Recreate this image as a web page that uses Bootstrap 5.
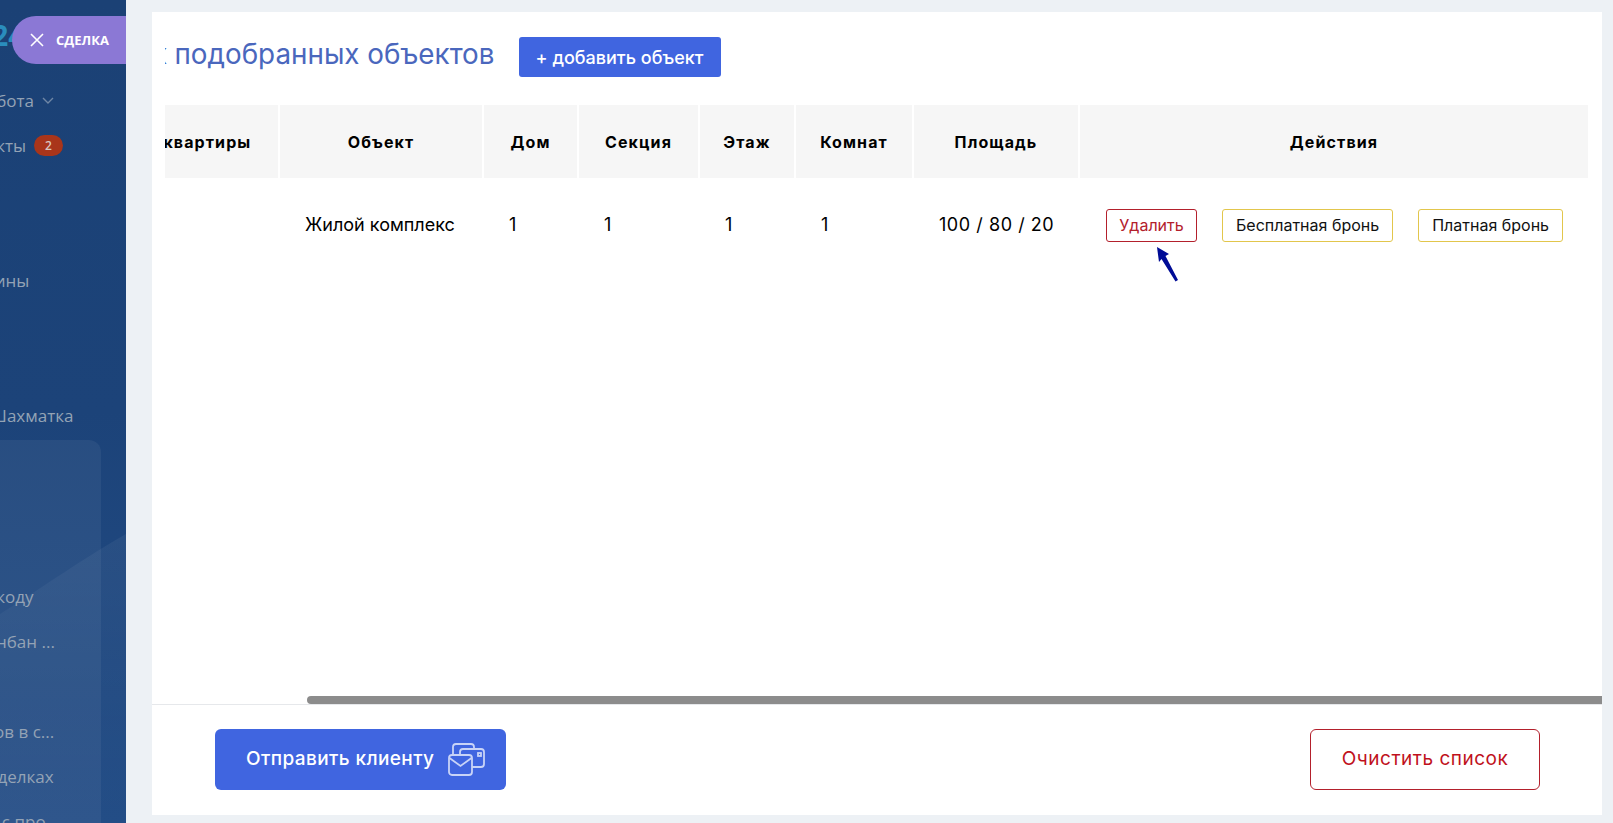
<!DOCTYPE html>
<html lang="ru">
<head>
<meta charset="UTF-8">
<meta name="viewport" content="width=device-width, initial-scale=1">
<title>Список подобранных объектов</title>
<link href="https://cdn.jsdelivr.net/npm/bootstrap@5.3.2/dist/css/bootstrap.min.css" rel="stylesheet">
<style>
    html, body { height: 100%; }
    body { overflow: hidden; background: #edf1f5; font-family: "Inter", "Liberation Sans", sans-serif; }

    /* левое меню */
    .side-panel { width: 126px; height: 823px; overflow: hidden; background: linear-gradient(180deg, #1b4175 0%, #1c4379 50%, #234d86 100%); }
    .side-glass { left: 0; top: 440px; width: 101px; height: 400px; border-radius: 0 12px 0 0; background: rgba(255,255,255,.055); }
    .side-wave { left: 0; top: 534px; width: 126px; height: 289px; }
    .side-logo { left: -44px; top: 13px; font: 700 28px "Open Sans", sans-serif; color: #2a8dbd; line-height: 44px; }
    .deal-pill { left: 12px; top: 16px; width: 114px; height: 48px; border-radius: 24px 0 0 24px; background: #8b78d5; color: #fff; font: 700 13px "Open Sans", sans-serif; }
    .deal-close { margin: 0 11px 0 17px; }
    .side-list { margin: 0; padding: 78px 0 0; list-style: none; }
    .side-row { height: 45px; display: flex; align-items: center; gap: 8px; margin-left: -60px; white-space: nowrap; color: #94a3b5; font: 400 17px "Open Sans", sans-serif; }
    .side-row-shift { margin-left: -55px; }
    .side-row-back { margin-left: -63px; }
    .side-row-far { margin-left: -50px; }
    .side-row-low { margin-top: 1px; }
    .side-count { background: #a9351a; color: #d9c7c0; font-size: 12px; font-weight: 600; border-radius: 11px; padding: 2px 11px; line-height: 17px; }

    /* карточка */
    .page-main { padding: 12px 11px 8px 26px; height: 823px; min-width: 0; }
    .objects-card { background: #fff; height: 803px; }
    .objects-scroll { margin-left: 13px; overflow: hidden; }
    .objects-inner { width: 1609px; padding: 25px 14px 0 0; }
    .title-row { height: 40px; padding-left: 73px; gap: 24px; }
    .objects-title { margin: 0; padding-bottom: 4px; font-size: 27.8px; font-weight: 400; color: #4a67bd; white-space: nowrap; }
    .btn-add { background: #4065e0; color: #fff; border: 0; border-radius: 3px; height: 40px; width: 202px; padding: 0; font-size: 18px; font-weight: 500; }

    .objects-table { table-layout: fixed; width: 1595px; margin-top: 28px; color: #000; }
    .objects-table th { height: 73px; background: #f6f6f6; border-right: 2px solid #fff; border-bottom: 0; text-align: center; vertical-align: middle; font-size: 16px; font-weight: 700; letter-spacing: 1.1px; padding: 0; box-shadow: none; }
    .objects-table th:last-child { border-right: 0; }
    .objects-table td { height: 92px; padding: 33px 0 0 26px; vertical-align: top; font-size: 18px; border: 0; box-shadow: none; white-space: nowrap; }
    .objects-table td.cell-area { letter-spacing: .55px; }
    .objects-table td.cell-actions { padding-left: 27px; }
    .w-a { width: 78px; } .w-b { width: 208px; } .w-c { width: 204px; } .w-d { width: 95px; } .w-e { width: 121px; }
    .w-f { width: 96px; } .w-g { width: 118px; } .w-h { width: 166px; } .w-i { width: 509px; }
    .row-actions { gap: 25px; margin-top: -2px; }
    .btn-row { height: 33px; padding: 0 13px; border-radius: 3px; background: #fff; font-size: 16px; line-height: 31px; white-space: nowrap; }
    .btn-del { border: 1px solid #b3202c; color: #b3202c; width: 91px; padding: 0; }
    .btn-book { border: 1px solid #e2c64c; color: #111; }

    .hint-arrow { left: 1005px; top: 235px; width: 22px; height: 35px; }

    .scroll-track { height: 9px; padding-left: 155px; border-bottom: 1px solid #e6e8eb; }
    .scroll-thumb { height: 8px; background: #8c8c8c; border-radius: 4px 0 0 4px; }

    .card-foot { padding: 24px 62px 25px 63px; }
    .btn-send { width: 291px; height: 61px; background: #4065e0; border: 0; border-radius: 6px; color: #fff; font-size: 19px; font-weight: 500; letter-spacing: .4px; gap: 14px; padding: 0 0 0 31px; }
    .btn-clear { width: 230px; height: 61px; background: #fff; border: 1px solid #b3202c; border-radius: 6px; color: #c0111c; font-size: 19px; font-weight: 400; letter-spacing: .5px; padding: 0; }
</style>
</head>
<body>

<div class="d-flex">
    <aside class="side-panel position-relative flex-shrink-0">
        <div class="side-glass position-absolute"></div>
        <svg class="side-wave position-absolute" viewBox="0 0 126 289" preserveAspectRatio="none">
            <defs>
                <linearGradient id="waveFill" x1="0" y1="0" x2="0" y2="1">
                    <stop offset="0" stop-color="#fff" stop-opacity=".05"/>
                    <stop offset=".6" stop-color="#fff" stop-opacity=".015"/>
                    <stop offset="1" stop-color="#fff" stop-opacity="0"/>
                </linearGradient>
            </defs>
            <path d="M126 0C90 20 40 55 0 80V289H126Z" fill="url(#waveFill)"/>
        </svg>
        <div class="side-logo position-absolute">CR24</div>
        <ul class="side-list position-relative">
            <li class="side-row side-row-back">Моя работа
                <svg width="12" height="8" viewBox="0 0 12 8" fill="none" stroke="#6f86a5" stroke-width="1.4"><path d="M1 1l5 5 5-5"/></svg>
            </li>
            <li class="side-row side-row-back">Контракты <span class="side-count">2</span></li>
            <li class="side-row"></li>
            <li class="side-row"></li>
            <li class="side-row side-row-shift">Магазины</li>
            <li class="side-row"></li>
            <li class="side-row"></li>
            <li class="side-row side-row-far">Моя Шахматка</li>
            <li class="side-row"></li>
            <li class="side-row"></li>
            <li class="side-row"></li>
            <li class="side-row side-row-low">По QR-коду</li>
            <li class="side-row side-row-back">Мой канбан ...</li>
            <li class="side-row"></li>
            <li class="side-row side-row-shift">Отчётов в с...</li>
            <li class="side-row">Тип в сделках</li>
            <li class="side-row">Работа с про</li>
        </ul>
        <div class="deal-pill position-absolute d-flex align-items-center">
            <svg class="deal-close" width="16" height="16" viewBox="0 0 16 16" fill="none" stroke="#fff" stroke-width="1.6"><path d="M2 2l12 12M14 2L2 14"/></svg>
            СДЕЛКА
        </div>
    </aside>

    <main class="page-main flex-grow-1">
        <div class="objects-card position-relative d-flex flex-column">
            <div class="objects-scroll flex-grow-1" id="objectsScroll">
                <div class="objects-inner">
                    <div class="title-row d-flex align-items-center">
                        <h2 class="objects-title">Список подобранных объектов</h2>
                        <button class="btn-add" type="button">+ добавить объект</button>
                    </div>
                    <table class="table objects-table">
                        <colgroup>
                            <col class="w-a"><col class="w-b"><col class="w-c"><col class="w-d"><col class="w-e">
                            <col class="w-f"><col class="w-g"><col class="w-h"><col class="w-i">
                        </colgroup>
                        <thead>
                            <tr>
                                <th>№</th>
                                <th>Номер квартиры</th>
                                <th>Объект</th>
                                <th>Дом</th>
                                <th>Секция</th>
                                <th>Этаж</th>
                                <th>Комнат</th>
                                <th>Площадь</th>
                                <th>Действия</th>
                            </tr>
                        </thead>
                        <tbody>
                            <tr>
                                <td></td>
                                <td></td>
                                <td>Жилой комплекс</td>
                                <td>1</td>
                                <td>1</td>
                                <td>1</td>
                                <td>1</td>
                                <td class="cell-area">100 / 80 / 20</td>
                                <td class="cell-actions">
                                    <div class="row-actions d-flex">
                                        <button class="btn-row btn-del" type="button">Удалить</button>
                                        <button class="btn-row btn-book" type="button">Бесплатная бронь</button>
                                        <button class="btn-row btn-book" type="button">Платная бронь</button>
                                    </div>
                                </td>
                            </tr>
                        </tbody>
                    </table>
                </div>
            </div>

            <div class="scroll-track">
                <div class="scroll-thumb"></div>
            </div>

            <div class="card-foot d-flex justify-content-between">
                <button class="btn-send d-flex align-items-center" type="button">
                    Отправить клиенту
                    <svg width="37" height="33" viewBox="0 0 37 33" fill="none" stroke="#c8d3f7" stroke-width="1.8">
                        <path d="M5 12V4a3 3 0 0 1 3-3H23a3 3 0 0 1 3 3V6"/>
                        <path d="M12 12V9a3 3 0 0 1 3-3H33a3 3 0 0 1 3 3V21a3 3 0 0 1-3 3H24"/>
                        <rect x="30" y="10" width="3" height="3"/>
                        <rect x="1" y="12" width="23" height="20" rx="3"/>
                        <path d="M1.500 15l11 8 11-8"/>
                    </svg>
                </button>
                <button class="btn-clear" type="button">Очистить список</button>
            </div>

            <svg class="hint-arrow position-absolute" viewBox="0 0 22 35">
                <path d="M0 0L12 7 8.500 9 21 33 18.500 34.500 4.500 12 2 15Z" fill="#000c96"/>
            </svg>
        </div>
    </main>
</div>

<script src="https://cdn.jsdelivr.net/npm/bootstrap@5.3.2/dist/js/bootstrap.bundle.min.js"></script>
<script>
    // таблица прокручена вправо
    document.getElementById('objectsScroll').scrollLeft = 172;
</script>
</body>
</html>
